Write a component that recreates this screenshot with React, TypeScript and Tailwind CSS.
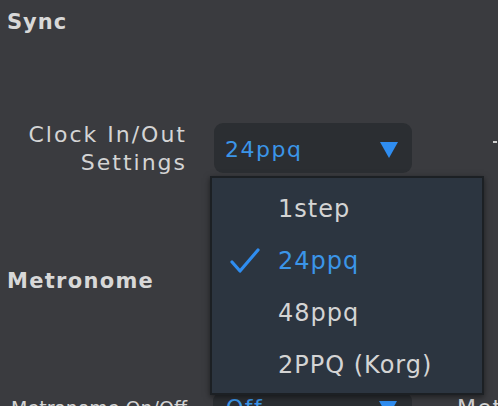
import React from "react"

const items = ["1step", "24ppq", "48ppq", "2PPQ (Korg)"]

function Triangle() {
  return (
    <svg width="18" height="17" viewBox="0 0 18 17" className="shrink-0">
      <polygon points="0,1 18,1 9,17" fill="#2f8df0" />
    </svg>
  )
}

function Check() {
  return (
    <svg width="30" height="26" viewBox="0 0 30 26" className="shrink-0">
      <path d="M2 14 L10 23 L28 2" fill="none" stroke="#2f8df0" strokeWidth="3.2" strokeLinecap="round" strokeLinejoin="round" />
    </svg>
  )
}

export default function App() {
  return (
    <div
      className="relative w-[498px] h-[406px] overflow-hidden bg-[#3a3b3f] text-[#d4d4d4]"
      style={{ fontFamily: '"DejaVu Sans", "Open Sans", sans-serif' }}
    >
      {/* Sync section */}
      <div className="pt-[8px] pl-[7px] text-[21px] font-bold leading-[28px] tracking-[1px] text-[#d8d8d8]">Sync</div>

      <div className="mt-[85px] flex items-start">
        <div className="w-[187px] shrink-0 text-right text-[22px] leading-[28px] tracking-[2px]">
          <div>Clock In/Out</div>
          <div>Settings</div>
        </div>
        <div className="ml-[27px] mt-[2px] w-[198px] h-[50px] shrink-0 rounded-[9px] bg-[#2b2e32] flex items-center justify-between pl-[11px] pr-[14px] pt-[2px]">
          <span className="text-[22px] tracking-[1.5px] text-[#3b95e8]">24ppq</span>
          <Triangle />
        </div>
        <div className="ml-[81px] mt-[20px] w-[4px] h-[2px] shrink-0 bg-[#cfcfcf]" />
      </div>

      {/* Metronome section */}
      <div className="mt-[90px] pl-[7px] text-[21px] font-bold leading-[28px] tracking-[1.3px] text-[#d8d8d8]">Metronome</div>

      <div className="mt-[97px] flex items-start">
        <div className="w-[187px] shrink-0 pt-[2px] text-right text-[19px] leading-[28px] whitespace-nowrap">Metronome On/Off</div>
        <div className="ml-[26px] w-[199px] h-[50px] shrink-0 rounded-[9px] bg-[#2b2e32] flex items-start justify-between pl-[13px] pr-[15px] pt-[2px]">
          <span className="text-[22px] leading-[28px] tracking-[1.5px] text-[#3b95e8]">Off</span>
          <div className="pt-[6px]">
            <Triangle />
          </div>
        </div>
        <div className="ml-[45px] shrink-0 pt-[2px] text-[22px] leading-[28px] tracking-[1.5px] whitespace-nowrap">Metro</div>
      </div>

      {/* Open dropdown menu */}
      <div className="absolute left-[210px] top-[176px] w-[274px] h-[219px] bg-[#2c3540] border-2 border-[#1c2024] shadow-[0_2px_6px_rgba(0,0,0,0.5)] pt-[5px]">
        {items.map((item) => {
          const selected = item === "24ppq"
          return (
            <div key={item} className="h-[52px] flex items-center">
              <div className="w-[66px] flex justify-end pr-[18px]">{selected && <Check />}</div>
              <span className={`text-[24px] tracking-[1px] ${selected ? "text-[#3b95e8]" : "text-[#d4d4d4]"}`}>{item}</span>
            </div>
          )
        })}
      </div>
    </div>
  )
}
